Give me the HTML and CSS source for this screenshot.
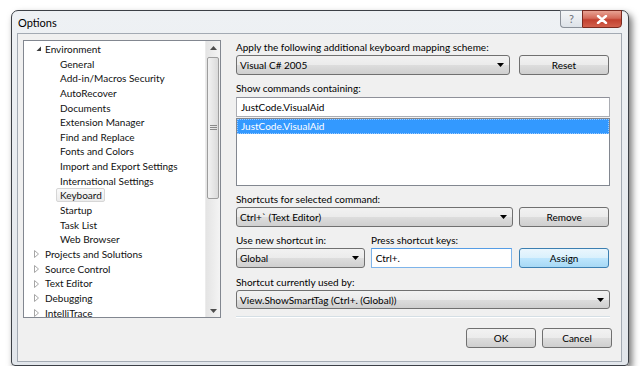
FILE: index.html
```html
<!DOCTYPE html>
<html>
    <head>
        <meta charset="UTF-8">
        <title>Options</title>
        <link rel="stylesheet" href="styles.css">
    </head>

    <body>
        <div class="window">
            <div class="titlebar">
                <span class="title">Options</span>
                <div class="caption-buttons">
                    <div class="cap-help">?</div>
                    <div class="cap-close">
                        <svg width="12" height="9" viewBox="0 0 12 9">
                            <path d="M2 1 L10 8 M10 1 L2 8" stroke="#fff" stroke-width="2.4" stroke-linecap="round"/>
                        </svg>
                    </div>
                </div>
            </div>

            <div class="client">
                <div class="main">
                    <div class="tree">
                        <ul class="tree-list">
                            <li class="node">
                                <svg class="arrow" width="6" height="6" viewBox="0 0 6 6"><path d="M5 0.5 L5 5 L0.5 5 Z" fill="#3c3c3c"/></svg>
                                Environment
                            </li>
                            <li class="child">General</li>
                            <li class="child">Add-in/Macros Security</li>
                            <li class="child">AutoRecover</li>
                            <li class="child">Documents</li>
                            <li class="child">Extension Manager</li>
                            <li class="child">Find and Replace</li>
                            <li class="child">Fonts and Colors</li>
                            <li class="child">Import and Export Settings</li>
                            <li class="child">International Settings</li>
                            <li class="child"><span class="selected">Keyboard</span></li>
                            <li class="child">Startup</li>
                            <li class="child">Task List</li>
                            <li class="child">Web Browser</li>
                            <li class="node collapsed">
                                <svg class="arrow" width="6" height="8" viewBox="0 0 6 8"><path d="M0.5 0.5 L4.5 4 L0.5 7.5 Z" fill="none" stroke="#a6a6a6"/></svg>
                                Projects and Solutions
                            </li>
                            <li class="node collapsed">
                                <svg class="arrow" width="6" height="8" viewBox="0 0 6 8"><path d="M0.5 0.5 L4.5 4 L0.5 7.5 Z" fill="none" stroke="#a6a6a6"/></svg>
                                Source Control
                            </li>
                            <li class="node collapsed">
                                <svg class="arrow" width="6" height="8" viewBox="0 0 6 8"><path d="M0.5 0.5 L4.5 4 L0.5 7.5 Z" fill="none" stroke="#a6a6a6"/></svg>
                                Text Editor
                            </li>
                            <li class="node collapsed">
                                <svg class="arrow" width="6" height="8" viewBox="0 0 6 8"><path d="M0.5 0.5 L4.5 4 L0.5 7.5 Z" fill="none" stroke="#a6a6a6"/></svg>
                                Debugging
                            </li>
                            <li class="node collapsed">
                                <svg class="arrow" width="6" height="8" viewBox="0 0 6 8"><path d="M0.5 0.5 L4.5 4 L0.5 7.5 Z" fill="none" stroke="#a6a6a6"/></svg>
                                IntelliTrace
                            </li>
                        </ul>

                        <div class="scrollbar">
                            <div class="scroll-arrow">
                                <svg width="7" height="4" viewBox="0 0 7 4"><path d="M0 4 L3.5 0 L7 4 Z" fill="#4d4d4d"/></svg>
                            </div>
                            <div class="scroll-track">
                                <div class="scroll-thumb">
                                    <svg width="7" height="6" viewBox="0 0 7 6"><path d="M0 0.5 H7 M0 2.5 H7 M0 4.5 H7" stroke="#8a8a8a"/></svg>
                                </div>
                            </div>
                            <div class="scroll-arrow">
                                <svg width="7" height="4" viewBox="0 0 7 4"><path d="M0 0 L3.5 4 L7 0 Z" fill="#4d4d4d"/></svg>
                            </div>
                        </div>
                    </div>

                    <div class="settings">
                        <p class="label">Apply the following additional keyboard mapping scheme:</p>
                        <div class="row">
                            <div class="combo combo-scheme">
                                <span>Visual C# 2005</span>
                                <svg class="drop" width="7" height="4" viewBox="0 0 7 4"><path d="M0 0 L7 0 L3.5 4 Z" fill="#000"/></svg>
                            </div>
                            <button class="button side-button">Reset</button>
                        </div>

                        <p class="label gap">Show commands containing:</p>
                        <div class="textbox textbox-search">JustCode.VisualAid</div>
                        <div class="listbox">
                            <div class="list-item">JustCode.VisualAid</div>
                        </div>

                        <p class="label gap">Shortcuts for selected command:</p>
                        <div class="row">
                            <div class="combo combo-shortcuts">
                                <span>Ctrl+` (Text Editor)</span>
                                <svg class="drop" width="7" height="4" viewBox="0 0 7 4"><path d="M0 0 L7 0 L3.5 4 Z" fill="#000"/></svg>
                            </div>
                            <button class="button side-button">Remove</button>
                        </div>

                        <div class="row label-row gap">
                            <p class="label label-scope">Use new shortcut in:</p>
                            <p class="label">Press shortcut keys:</p>
                        </div>
                        <div class="row">
                            <div class="combo combo-scope">
                                <span>Global</span>
                                <svg class="drop" width="7" height="4" viewBox="0 0 7 4"><path d="M0 0 L7 0 L3.5 4 Z" fill="#000"/></svg>
                            </div>
                            <div class="textbox textbox-keys">Ctrl+.</div>
                            <button class="button side-button assign">Assign</button>
                        </div>

                        <p class="label gap-wide">Shortcut currently used by:</p>
                        <div class="combo combo-used">
                            <span>View.ShowSmartTag (Ctrl+. (Global))</span>
                            <svg class="drop" width="7" height="4" viewBox="0 0 7 4"><path d="M0 0 L7 0 L3.5 4 Z" fill="#000"/></svg>
                        </div>

                        <div class="separator"></div>
                    </div>
                </div>

                <div class="footer">
                    <button class="button footer-button">OK</button>
                    <button class="button footer-button">Cancel</button>
                </div>
            </div>
        </div>
    </body>
</html>
```

FILE: styles.css
```css
body {
    margin: 0;
    background-color: white;
    font-family: Lato, "Noto Sans", sans-serif;
    font-size: 10px;
    color: #111;
}

.window {
    margin: 10px 0 0 11px;
    width: 616px;
    height: 354px;
    border: 1px solid #3c4046;
    border-radius: 7px 7px 4px 4px;
    background: linear-gradient(#eef1f4, #e2e6eb);
    box-shadow: 3px 4px 7px rgba(0, 0, 0, 0.55);
    display: flex;
    flex-direction: column;
}

.titlebar {
    height: 22px;
    display: flex;
    justify-content: space-between;
    align-items: flex-start;
}

.title {
    margin: 5px 0 0 6px;
    font-size: 11px;
    color: #000;
}

.caption-buttons {
    display: flex;
    margin: -1px 6px 0 0;
}

.cap-help {
    width: 21px;
    height: 16px;
    border: 1px solid #8a9099;
    border-right: none;
    border-radius: 0 0 0 4px;
    background: linear-gradient(#f4f6f8, #dde2e8);
    color: #6b7078;
    font-size: 11px;
    text-align: center;
    line-height: 16px;
}

.cap-close {
    width: 38px;
    height: 16px;
    border: 1px solid #7a2a20;
    border-radius: 0 0 4px 0;
    background: linear-gradient(#e8a293, #d46a59 45%, #c2402f 55%, #d2604c);
    display: flex;
    justify-content: center;
    align-items: center;
}

.client {
    margin: 0 6px 3px 5px;
    flex: 1;
    border: 1px solid #a3aab3;
    background-color: #f0f0f0;
    display: flex;
    flex-direction: column;
}

.main {
    display: flex;
    padding: 6px 0 0 5px;
}

.tree {
    width: 196px;
    height: 276px;
    border: 1px solid #828790;
    background-color: white;
    display: flex;
    overflow: hidden;
}

.tree-list {
    flex: 1;
    list-style: none;
    margin: 0;
    padding: 1px 0 0 0;
}

.tree-list li {
    height: 14.65px;
    line-height: 14.65px;
    white-space: nowrap;
    color: #111;
}

.node {
    padding-left: 9px;
    display: flex;
    align-items: center;
}

.node .arrow {
    margin-left: 3px;
    margin-right: 3px;
}

.node.collapsed .arrow {
    margin-left: 1px;
    margin-right: 5px;
}

.child {
    padding-left: 36px;
}

.selected {
    display: inline-block;
    line-height: 12px;
    padding: 0 2px 0 3px;
    margin-left: -4px;
    border: 1px solid #d6d6d6;
    border-radius: 2px;
    background: linear-gradient(#fafafa, #ececec);
}

.scrollbar {
    width: 14px;
    display: flex;
    flex-direction: column;
    background: linear-gradient(to right, #e4e4e4, #f4f4f4);
    border-left: 1px solid #ececec;
}

.scroll-arrow {
    height: 13px;
    display: flex;
    justify-content: center;
    align-items: center;
}

.scroll-track {
    flex: 1;
    padding: 3px 0 0 1px;
}

.scroll-thumb {
    width: 10px;
    height: 140px;
    border: 1px solid #9d9d9d;
    border-radius: 2px;
    background: linear-gradient(to right, #f2f2f2, #dadada);
    display: flex;
    justify-content: center;
    align-items: center;
}

.settings {
    margin-left: 15px;
    width: 374px;
    display: flex;
    flex-direction: column;
}

.label {
    margin: 0;
    height: 14px;
    line-height: 14px;
    color: #000;
    white-space: nowrap;
}

.gap {
    margin-top: 6px;
}

.gap-wide {
    margin-top: 7px;
}

.row {
    display: flex;
    margin-top: 1px;
}

.label-row {
    margin-top: 6px;
}

.label-scope {
    width: 135px;
}

.combo {
    box-sizing: border-box;
    height: 20px;
    border: 1px solid #707070;
    border-radius: 3px;
    background: linear-gradient(#f2f2f2, #ebebeb 50%, #dddddd 51%, #cfcfcf);
    display: flex;
    justify-content: space-between;
    align-items: center;
    padding: 0 5px 0 3px;
    color: #000;
}

.combo-scheme {
    width: 274px;
}

.combo-shortcuts {
    width: 278px;
    margin-right: 6px;
}

.combo-scope {
    width: 129px;
    margin-right: 6px;
}

.combo-used {
    width: 374px;
    height: 19px;
    margin-top: 1px;
}

.textbox {
    box-sizing: border-box;
    height: 20px;
    border: 1px solid #abadb3;
    border-top-color: #8e9099;
    background-color: white;
    padding: 0 4px;
    line-height: 18px;
    color: #000;
}

.textbox-search {
    margin-top: 2px;
    width: 374px;
}

.textbox-keys {
    width: 142px;
    margin-right: 7px;
    border-color: #7eb4ea;
    border-top-color: #569de5;
}

.listbox {
    box-sizing: border-box;
    margin-top: 1px;
    width: 374px;
    height: 68px;
    border: 1px solid #828790;
    background-color: white;
}

.list-item {
    height: 13px;
    line-height: 13px;
    background-color: #3399ff;
    color: white;
    padding-left: 3px;
    border: 1px dotted #9ccaff;
    box-sizing: content-box;
}

.button {
    box-sizing: border-box;
    height: 20px;
    border: 1px solid #707070;
    border-radius: 3px;
    background: linear-gradient(#f2f2f2, #ebebeb 50%, #dddddd 51%, #cfcfcf);
    font-family: Lato, "Noto Sans", sans-serif;
    font-size: 10px;
    color: #000;
    padding: 0;
}

.side-button {
    width: 90px;
    margin-left: auto;
    margin-right: 1px;
}

.assign {
    border-color: #3c7fb1;
    background: linear-gradient(#eaf6fd, #d9f0fc 50%, #bee6fd 51%, #a7d9f5);
}

.separator {
    margin-top: 7px;
    height: 1px;
    border-bottom: 1px solid white;
    background-color: #d5dfe5;
}

.footer {
    display: flex;
    justify-content: flex-end;
    column-gap: 6px;
    margin-top: 10px;
    padding-right: 9px;
}

.footer-button {
    width: 70px;
}
```
